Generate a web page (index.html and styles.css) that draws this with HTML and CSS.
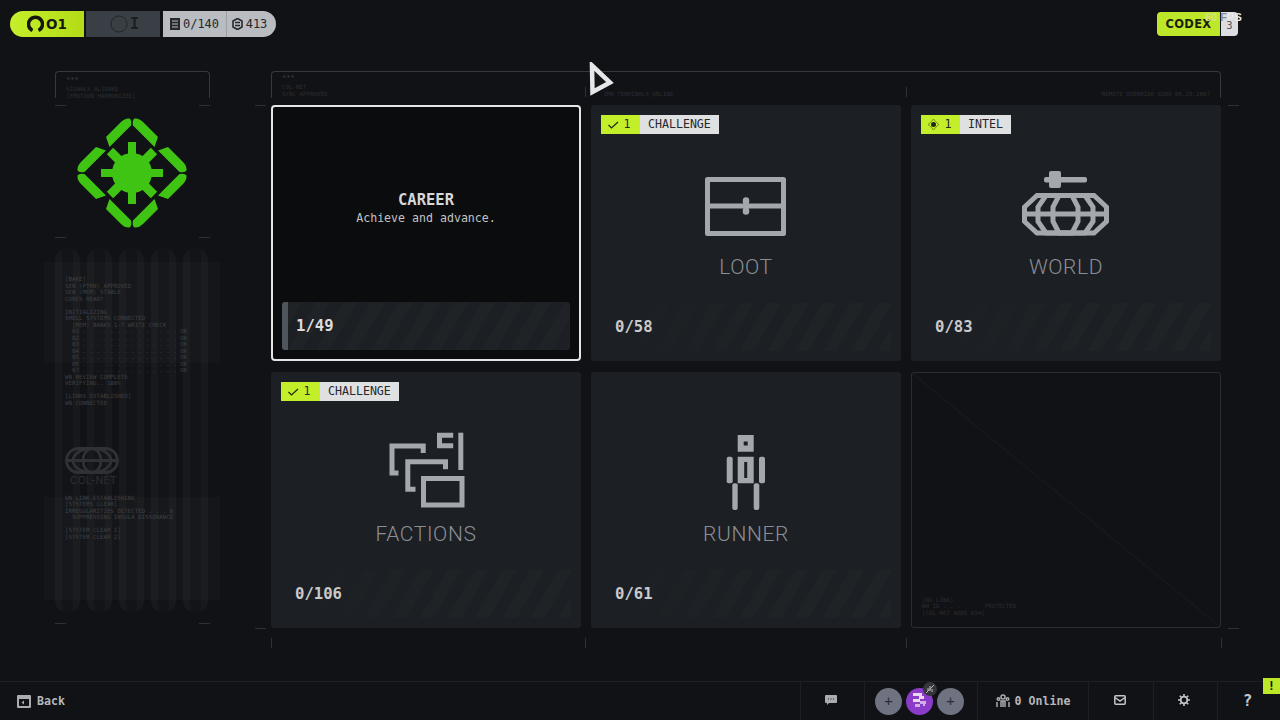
FILE: index.html
```html
<!DOCTYPE html>
<html lang="en">
<head>
    <meta charset="UTF-8">
    <meta name="viewport" content="width=device-width, initial-scale=1.0">
    <title>Codex</title>
    <link rel="stylesheet" href="styles.css">
</head>
<body>
    <header class="topbar">
        <div class="status-pill">
            <div class="seg seg-lime">
                <svg class="seg-icon" width="17" height="18" viewBox="0 0 17 18"><path d="M5.5 15.5A7 7 0 1 1 11.500 15.500" fill="none" stroke="#15170f" stroke-width="3.500"/></svg>
                <span class="seg-rank">O1</span>
            </div>
            <div class="seg seg-dark">
                <svg width="18" height="18" viewBox="0 0 18 18"><circle cx="9" cy="9" r="8" fill="none" stroke="#23262b" stroke-width="1"/></svg>
                <span class="seg-rank seg-rank-mono">I</span>
            </div>
            <div class="seg seg-grey seg-count">
                <svg width="10" height="12" viewBox="0 0 10 12"><path d="M0 0h10v12H0zM2 2.500v1h6v-1zM2 5.500v1h6v-1zM2 8.500v1h6v-1z" fill="#26282c" fill-rule="evenodd"/></svg>
                <span>0/140</span>
            </div>
            <div class="seg seg-grey seg-coins">
                <svg width="11" height="12" viewBox="0 0 11 12"><path d="M5.500.5l4.500 2.500v6l-4.500 2.500L1 9V3z" fill="none" stroke="#26282c" stroke-width="1.600"/><path d="M3 4.500h5M3 7.500h5" stroke="#26282c" stroke-width="1.400"/></svg>
                <span>413</span>
            </div>
        </div>
        <div class="codex">
            <span class="codex-name">CODEX</span>
            <span class="codex-count">3</span>
        </div>
        <div class="fps"><span class="fps-num">60</span> <span class="fps-f">F</span>PS</div>
    </header>

    <main class="content">
        <aside class="sidebar">
            <div class="frame">
                <div class="frame-dots">***</div>
                <div class="frame-text">SIGNALS_ALIGNED<br>[EMOTION HARMONIZED]</div>
            </div>
            <div class="logo">
                <svg width="112" height="112" viewBox="-56 -56 112 112">
                    <defs>
                        <g id="petal">
                            <path d="M-26 -36L-11 -51Q-7 -55 -2.500 -54.500Q0 -53 -1 -47.500L-22.500 -26Z"/>
                            <path d="M26 -36L11 -51Q7 -55 2.500 -54.500Q0 -53 1 -47.500L22.500 -26Z"/>
                        </g>
                    </defs>
                    <g fill="#3fc414">
                        <use href="#petal"/>
                        <use href="#petal" transform="rotate(90)"/>
                        <use href="#petal" transform="rotate(180)"/>
                        <use href="#petal" transform="rotate(270)"/>
                        <circle r="20"/>
                    </g>
                    <path d="M0 -31V31M-31 0H31" stroke="#3fc414" stroke-width="8"/>
                    <path d="M-22 -22L22 22M22 -22L-22 22" stroke="#3fc414" stroke-width="9"/>
                </svg>
            </div>
            <div class="pipes">
                <div class="pipe-block pipe-block-top"></div>
                <div class="pipe-block pipe-block-bottom"></div>
                <div class="pipe"></div>
                <div class="pipe"></div>
                <div class="pipe"></div>
                <div class="pipe"></div>
                <div class="pipe"></div>
                <div class="terminal">
<pre>[BAKE]
SEN (PTRN) APPROVED
SEN (MEM) STABLE
CORES READY

INITIALIZING_
SHELL SYSTEMS CONNECTED
  (MEM) BANKS 1-7 WRITE CHECK
  01 . . . . . . . . . . . . . . OK
  02 . . . . . . . . . . . . . . OK
  03 . . . . . . . . . . . . . . OK
  04 . . . . . . . . . . . . . . OK
  05 . . . . . . . . . . . . . . OK
  06 . . . . . . . . . . . . . . OK
  07 . . . . . . . . . . . . . . OK
WN REVIEW COMPLETE
VERIFYING.. 100%

[LINKS ESTABLISHED]
WN CONNECTED</pre>
                    <div class="colnet">
                        <svg width="54" height="27" viewBox="0 0 54 27" fill="none" stroke="#2f3135" stroke-width="2.800">
                            <rect x="1.500" y="1.500" width="51" height="24" rx="12"/>
                            <ellipse cx="27" cy="13.500" rx="19" ry="12"/>
                            <ellipse cx="27" cy="13.500" rx="9" ry="12"/>
                            <path d="M1.500 13.500H52.500"/>
                        </svg>
                        <div class="colnet-name">COL-NET</div>
                    </div>
<pre>WN_LINK ESTABLISHING_
[SYSTEMS CLEAR]
IRREGULARITIES DETECTED . . . 0
  SUPPRESSING INSULA DISSONANCE

[SYSTEM CLEAR 1]
[SYSTEM CLEAR 2]</pre>
                </div>
            </div>
            <i class="tick tick-h side-a"></i><i class="tick tick-h side-b"></i>
            <i class="tick tick-h side-c"></i><i class="tick tick-h side-d"></i>
            <i class="tick tick-h side-e"></i><i class="tick tick-h side-f"></i>
        </aside>

        <section class="board">
            <div class="frame frame-wide">
                <div>
                    <div class="frame-dots">***</div>
                    <div class="frame-text">COL-NET<br>SYNC_APPROVED</div>
                </div>
                <div class="frame-text frame-mid">IRN_TERMINALS_ONLINE</div>
                <div class="frame-text frame-end">REMOTE OVERRIDE 0209 06.25.2087</div>
            </div>

            <div class="card-grid">
                <article class="card card-active">
                    <div class="career-text">
                        <div class="career-title">CAREER</div>
                        <div class="career-sub">Achieve and advance.</div>
                    </div>
                    <div class="card-foot foot-bar"><span>1/49</span></div>
                </article>

                <article class="card">
                    <div class="tag"><span class="tag-num"><svg width="11" height="8" viewBox="0 0 11 8"><path d="M.5 4l3 3L10 1" fill="none" stroke="#23260f" stroke-width="1.200"/></svg>1</span><span class="tag-label">CHALLENGE</span></div>
                    <div class="card-icon">
                        <svg width="100" height="84" viewBox="0 0 100 84" fill="none" stroke="#a3a7ae" stroke-width="5" stroke-linejoin="round">
                            <rect x="11.500" y="19.500" width="76" height="54"/>
                            <path d="M11.500 46H87.500"/>
                            <path d="M50 40.500v1M50 50.500v1" stroke-width="6.500" stroke-linecap="round"/>
                        </svg>
                    </div>
                    <div class="card-title">LOOT</div>
                    <div class="card-foot"><span>0/58</span></div>
                </article>

                <article class="card">
                    <div class="tag"><span class="tag-num"><svg width="13" height="13" viewBox="0 0 13 13"><circle cx="6.500" cy="6.500" r="2.500" fill="#23260f"/><path d="M6.500 1l2 2.500 3.500 3-3.500 3-2 2.500-2-2.500L1 6.500l3.500-3z" fill="none" stroke="#5f7a12" stroke-width=".8"/></svg>1</span><span class="tag-label">INTEL</span></div>
                    <div class="card-icon">
                        <svg width="100" height="84" viewBox="0 0 100 84" fill="none" stroke="#a3a7ae" stroke-width="5">
                            <rect x="28" y="17" width="43" height="5.500" rx="2" fill="#a3a7ae" stroke="none"/>
                            <rect x="33" y="11" width="12" height="17" rx="2" fill="#a3a7ae" stroke="none"/>
                            <path d="M8.500 47L21 35.500H78L90.500 47V61.500L78 73H21L8.500 61.500Z"/>
                            <path d="M30 35.500H69L77 47V61.500L69 73H30L22 61.500V47Z"/>
                            <path d="M43 35.500H56L62 47V61.500L56 73H43L37 61.500V47Z"/>
                            <path d="M8.500 54H90.500"/>
                        </svg>
                    </div>
                    <div class="card-title">WORLD</div>
                    <div class="card-foot"><span>0/83</span></div>
                </article>

                <article class="card">
                    <div class="tag"><span class="tag-num"><svg width="11" height="8" viewBox="0 0 11 8"><path d="M.5 4l3 3L10 1" fill="none" stroke="#23260f" stroke-width="1.200"/></svg>1</span><span class="tag-label">CHALLENGE</span></div>
                    <div class="card-icon">
                        <svg width="100" height="84" viewBox="-9.500 -3 100 84" fill="none" stroke="#a3a7ae" stroke-width="5">
                            <path d="M13 43H6.500V16H37.700V23"/>
                            <path d="M30 59.300H22.300V31.700H60V39.300"/>
                            <rect x="38" y="48.500" width="38.500" height="26.500"/>
                            <path d="M67.700 5.300H54V15.700H67.700"/>
                            <path d="M75.300 2.700V40"/>
                        </svg>
                    </div>
                    <div class="card-title">FACTIONS</div>
                    <div class="card-foot"><span>0/106</span></div>
                </article>

                <article class="card">
                    <div class="card-icon">
                        <svg width="100" height="84" viewBox="0 0 100 84">
                            <g fill="#a3a7ae">
                                <path d="M41.700 8H57.700V24.700H41.700ZM47.700 14.500V18.500H51.700V14.500Z" fill-rule="evenodd"/>
                                <path d="M41.700 29.700H57.700V56.300H41.700ZM48.200 35V51H51.200V35Z" fill-rule="evenodd"/>
                                <rect x="30.700" y="29.700" width="6" height="26.600" rx="2"/>
                                <rect x="63" y="29.700" width="6" height="26.600" rx="2"/>
                                <rect x="36.300" y="56.300" width="5.400" height="26.700" rx="2"/>
                                <rect x="57.700" y="56.300" width="5.600" height="26.700" rx="2"/>
                            </g>
                        </svg>
                    </div>
                    <div class="card-title">RUNNER</div>
                    <div class="card-foot"><span>0/61</span></div>
                </article>

                <article class="card card-empty">
                    <pre class="empty-text">[NO LINK]
WN ID . . . . . . PROTECTED
[COL-NET NODE A94]</pre>
                </article>
            </div>

            <i class="tick tick-h board-a"></i><i class="tick tick-h board-b"></i>
            <i class="tick tick-h board-c"></i><i class="tick tick-h board-d"></i>
            <i class="tick tick-v board-e"></i><i class="tick tick-v board-f"></i>
            <i class="tick tick-v board-g"></i><i class="tick tick-v board-h"></i>
            <i class="tick tick-v board-i"></i><i class="tick tick-v board-j"></i>
        </section>
    </main>

    <footer class="bottombar">
        <div class="back">
            <svg width="14" height="13" viewBox="0 0 14 13"><path d="M1 0h12a1 1 0 0 1 1 1v11a1 1 0 0 1-1 1H1a1 1 0 0 1-1-1V1a1 1 0 0 1 1-1zM2 4v7h10V4z" fill="#a9acb1" fill-rule="evenodd"/><path d="M7 5.500L4.500 7.500 7 9.500z" fill="#a9acb1"/></svg>
            <span>Back</span>
        </div>
        <div class="cell cell-chat">
            <svg width="12" height="10" viewBox="0 0 12 10"><path d="M1 0h10a1 1 0 0 1 1 1v6a1 1 0 0 1-1 1H4L2 10V8H1a1 1 0 0 1-1-1V1a1 1 0 0 1 1-1z" fill="#a9acb1"/><path d="M3 4h1M5.500 4h1M8 4h1" stroke="#15161a" stroke-width="1.200"/></svg>
        </div>
        <div class="cell cell-party">
            <div class="slot">+</div>
            <div class="slot slot-me">
                <svg width="18" height="18" viewBox="0 0 18 18" fill="#e9d6f5"><path d="M2 1h9v3H2zM8 4h5v3H8zM2 7h7v3H2z"/><path d="M9 9h6v3H9zM4 12h5v3H4zM12 12h2v2h-2z" opacity=".75"/></svg>
                <span class="mute">
                    <svg width="10" height="10" viewBox="0 0 10 10" fill="none" stroke="#b7b9bd" stroke-width="1"><path d="M1 9L9 1M3 7V4M5 7V2M7 8V5"/></svg>
                </span>
            </div>
            <div class="slot">+</div>
        </div>
        <div class="cell cell-online">
            <svg width="14" height="14" viewBox="0 0 14 14" fill="none" stroke="#a9acb1" stroke-width="1.500"><circle cx="7" cy="3" r="2"/><circle cx="2.500" cy="5" r="1.300"/><circle cx="11.500" cy="5" r="1.300"/><path d="M5 13V7h4v6M7 7v6M1 13V8M13 13V8"/></svg>
            <span>0 Online</span>
        </div>
        <div class="cell cell-mail">
            <svg width="12" height="10" viewBox="0 0 12 10" fill="none" stroke="#c3c5c9" stroke-width="1.500"><rect x=".8" y=".8" width="10.400" height="8.400" rx="1"/><path d="M1 2.500L6 6l5-3.500"/></svg>
        </div>
        <div class="cell cell-gear">
            <svg width="12" height="12" viewBox="0 0 12 12" fill="none" stroke="#c3c5c9"><circle cx="6" cy="6" r="3.300" stroke-width="1.700"/><path d="M6 0v2.500M6 9.500V12M0 6h2.500M9.500 6H12M1.800 1.800l1.700 1.700M8.500 8.500l1.700 1.700M10.200 1.800L8.500 3.500M3.500 8.500l-1.700 1.700" stroke-width="1.600"/></svg>
        </div>
        <div class="cell cell-help">?</div>
        <div class="alert">!</div>
    </footer>

    <svg class="cursor" width="26" height="34" viewBox="0 0 26 34"><path d="M4 3.500L22 20.500 4.500 30Z" fill="#15161a" stroke="#e6e7e9" stroke-width="4.500"/></svg>
</body>
</html>
```

FILE: styles.css
```css
* {
    box-sizing: border-box;
}
body {
    margin: 0;
    width: 1280px;
    height: 720px;
    overflow: hidden;
    position: relative;
    display: flex;
    flex-direction: column;
    background: #111215;
    color: #a9acb1;
    font-family: 'DejaVu Sans Mono', monospace;
}
pre {
    margin: 0;
    font: inherit;
}

/* top bar */
.topbar {
    height: 71px;
    padding: 11px 42px 0 10px;
    display: flex;
    justify-content: space-between;
    align-items: flex-start;
    position: relative;
}
.status-pill {
    display: flex;
    height: 26px;
    border-radius: 13px;
    overflow: hidden;
    font-size: 12px;
    color: #26282c;
}
.seg {
    display: flex;
    align-items: center;
    justify-content: center;
}
.seg-lime {
    width: 74px;
    gap: 2px;
    background: linear-gradient(90deg, #c6ef2b, #b3dc17);
    margin-right: 2px;
}
.seg-dark {
    width: 74px;
    gap: 2px;
    padding-left: 3px;
    background: #3a3f46;
    margin-right: 3px;
}
.seg-grey {
    background: #b9bcc1;
    gap: 3px;
}
.seg-count {
    width: 64px;
    border-right: 1px solid #9c9fa4;
}
.seg-coins {
    width: 49px;
    padding-right: 4px;
}
.seg-rank {
    font-family: 'DejaVu Sans', sans-serif;
    font-weight: 700;
    font-size: 13.500px;
    color: #15170f;
}
.seg-rank-mono {
    font-family: 'DejaVu Sans Mono', monospace;
    font-size: 15px;
    color: #1b1d20;
}
.codex {
    display: flex;
    height: 24px;
    margin-top: 1px;
    font-size: 11px;
}
.codex-name {
    width: 63px;
    margin-right: 1px;
    background: #bde82a;
    border-radius: 4px 0 0 4px;
    color: #1c1f0d;
    font-family: 'DejaVu Sans', sans-serif;
    font-weight: 700;
    font-size: 11.500px;
    letter-spacing: .3px;
    text-align: center;
    line-height: 24px;
}
.codex-count {
    width: 17px;
    background: #dcdde0;
    border-radius: 0 4px 4px 0;
    color: #55575b;
    text-align: center;
    line-height: 26px;
    font-size: 10.500px;
}
.fps {
    position: absolute;
    top: 11px;
    left: 1205px;
    font-family: 'Liberation Sans', sans-serif;
    font-size: 11px;
    line-height: 13px;
    font-weight: 700;
    color: #e8e8e8;
}
.fps-num {
    color: #d6e382;
}
.fps-f {
    color: #8c8d90;
}

/* main */
.content {
    flex: 1;
    padding-left: 55px;
    display: flex;
    gap: 61px;
}
.sidebar {
    width: 155px;
    position: relative;
}
.board {
    width: 950px;
    position: relative;
}
.frame {
    height: 27px;
    padding: 6px 10px 0;
    border: 1px solid #36383c;
    border-bottom: 0;
    border-radius: 4px 4px 0 0;
    color: #2c2e32;
    font-size: 5.800px;
    line-height: 7px;
}
.frame-wide {
    display: flex;
    align-items: flex-end;
    padding-top: 0;
}
.frame-dots {
    line-height: 5px;
    font-size: 7px;
    color: #3c3e42;
    padding-bottom: 3px;
}
.frame-mid {
    margin-left: 276px;
}
.frame-end {
    margin-left: auto;
}
.frame-text {
    white-space: nowrap;
}

/* sidebar art */
.logo {
    height: 150px;
    padding-top: 19px;
    padding-left: 21px;
}
.pipes {
    position: relative;
    height: 365px;
    display: flex;
    gap: 7px;
}
.pipe {
    width: 25px;
    border-radius: 13px;
    background: linear-gradient(90deg, #18191c 0 28%, #131417 28% 72%, #18191c 72%);
}
.pipe-block {
    position: absolute;
    left: -11px;
    width: 176px;
    background: rgba(255, 255, 255, .018);
}
.pipe-block-top {
    top: 14px;
    height: 101px;
}
.pipe-block-bottom {
    top: 249px;
    height: 103px;
}
.terminal {
    position: absolute;
    left: 10px;
    top: 28px;
    color: #3e4044;
    font-size: 5.800px;
    line-height: 6.500px;
}
.colnet {
    margin: 41px 0 9px;
}
.colnet-name {
    font-family: 'Inter', sans-serif;
    font-size: 10.500px;
    line-height: 10px;
    color: #2c2e32;
    padding-left: 5px;
}

/* cards */
.card-grid {
    margin-top: 7px;
    display: grid;
    grid-template-columns: repeat(3, 310px);
    grid-auto-rows: 256px;
    column-gap: 10px;
    row-gap: 11px;
}
.card {
    position: relative;
    background: #1c1f23;
    border-radius: 3px;
    display: flex;
    flex-direction: column;
    align-items: center;
    padding-top: 55px;
}
.card-active {
    background: #0b0c0e;
    border: 2px solid #e4e5e6;
    border-radius: 4px;
    padding-top: 0;
}
.card-empty {
    background: linear-gradient(to top right, transparent calc(50% - 1px), #17191c 50%, transparent calc(50% + 1px));
    border: 1px solid #2a2d31;
    padding: 0;
}
.empty-text {
    position: absolute;
    left: 10px;
    bottom: 11px;
    color: #2a2c30;
    font-size: 5.800px;
    line-height: 6.500px;
}
.tag {
    position: absolute;
    top: 10px;
    left: 10px;
    display: flex;
    height: 19px;
    font-size: 11.600px;
    line-height: 19px;
    color: #26282c;
}
.tag-num {
    width: 39px;
    padding-right: 3px;
    background: #c3ee2a;
    display: flex;
    align-items: center;
    justify-content: center;
    gap: 5px;
}
.tag-label {
    background: #dfe0e2;
    padding: 0 8px;
}
.card-icon {
    height: 84px;
}
.card-icon svg {
    display: block;
}
.card-title {
    margin-top: 11px;
    font-family: 'Roboto', sans-serif;
    font-weight: 300;
    font-size: 21px;
    line-height: 24px;
    letter-spacing: .6px;
    color: #8b8f95;
}
.card-foot {
    position: absolute;
    left: 10px;
    right: 10px;
    bottom: 10px;
    height: 48px;
    padding-left: 14px;
    display: flex;
    align-items: center;
    font-size: 15.600px;
    font-weight: 700;
    color: #c9cacc;
    background: linear-gradient(90deg, #1c1f23 5%, rgba(28, 31, 35, 0) 55%), repeating-linear-gradient(120deg, rgba(255, 255, 255, .016) 0 12px, transparent 12px 24px);
}
.foot-bar {
    left: 9px;
    right: 9px;
    bottom: 9px;
    padding-left: 8px;
    background: repeating-linear-gradient(120deg, rgba(255, 255, 255, .016) 0 12px, transparent 12px 24px), #1c1f23;
    border-left: 6px solid #50545c;
    border-radius: 3px;
    color: #dcdcde;
}
.career-text {
    margin-top: 84px;
    text-align: center;
}
.career-title {
    font-size: 15.500px;
    line-height: 19px;
    font-weight: 700;
    color: #d6d7d9;
}
.career-sub {
    font-size: 11.600px;
    line-height: 16px;
    color: #c2c3c5;
}

/* crop marks */
.tick {
    position: absolute;
    background: #2e3034;
}
.tick-h {
    width: 11px;
    height: 1px;
}
.tick-v {
    width: 1px;
    height: 10px;
}
.side-a { left: 0; top: 34px; }
.side-b { left: 144px; top: 34px; }
.side-c { left: 0; top: 166px; }
.side-d { left: 144px; top: 166px; }
.side-e { left: 0; top: 552px; }
.side-f { left: 144px; top: 552px; }
.board-a { left: -16px; top: 34px; }
.board-b { left: 957px; top: 34px; }
.board-c { left: -16px; top: 557px; }
.board-d { left: 957px; top: 557px; }
.board-e { left: 0; top: 567px; }
.board-f { left: 314px; top: 567px; }
.board-g { left: 635px; top: 567px; }
.board-h { left: 950px; top: 567px; }
.board-i { left: 314px; top: 16px; }
.board-j { left: 635px; top: 16px; }

/* bottom bar */
.bottombar {
    height: 39px;
    border-top: 1px solid #1d1f22;
    display: flex;
    align-items: stretch;
    position: relative;
    font-size: 11.600px;
    font-weight: 700;
    color: #b5b7bb;
}
.back {
    width: 800px;
    padding-left: 17px;
    display: flex;
    align-items: center;
    gap: 6px;
}
.cell {
    display: flex;
    align-items: center;
    justify-content: center;
    border-left: 1px solid #1d1f22;
}
.cell-chat { width: 64px; padding: 0 3px 2px 0; }
.cell-party { width: 113px; gap: 4px; padding-right: 3px; }
.cell-online { width: 111px; gap: 5px; }
.cell-mail { width: 65px; padding: 0 2px 2px 0; }
.cell-gear { width: 64px; padding: 0 3px 2px 0; }
.cell-help { width: 63px; font-size: 16px; padding: 0 3px 2px 0; color: #c3c5c9; }
.slot {
    width: 27px;
    height: 27px;
    border-radius: 50%;
    background: #6f7280;
    color: #2c2e36;
    font-size: 14px;
    font-weight: 400;
    display: flex;
    align-items: center;
    justify-content: center;
    position: relative;
}
.slot-me {
    background: #8a3cc8;
}
.mute {
    position: absolute;
    top: -6px;
    right: -4px;
    width: 14px;
    height: 14px;
    border-radius: 50%;
    background: #34363a;
    display: flex;
    align-items: center;
    justify-content: center;
}
.alert {
    position: absolute;
    right: 0;
    top: -4px;
    width: 17px;
    height: 16px;
    background: #bde82a;
    color: #15170f;
    font-size: 13px;
    font-weight: 700;
    line-height: 16px;
    text-align: center;
}
.cursor {
    position: absolute;
    left: 588px;
    top: 62px;
}
```
